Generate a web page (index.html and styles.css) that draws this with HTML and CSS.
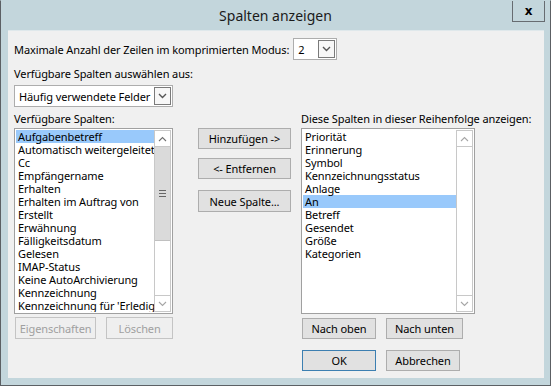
FILE: index.html
```html
<!DOCTYPE html>
<html lang="de">
<head>
  <meta charset="UTF-8">
  <meta name="viewport" content="width=device-width, initial-scale=1.0">
  <title>Spalten anzeigen</title>
  <link rel="stylesheet" href="styles.css">
</head>
<body>

  <div class="window">
    <!-- Title bar -->
    <div class="titlebar">
      <span></span>
      <span class="title">Spalten anzeigen</span>
      <button class="close">x</button>
    </div>

    <div class="client">
      <div class="row-max">
        <span>Maximale Anzahl der Zeilen im komprimierten Modus:</span>
        <div class="combo combo-small">
          <span class="combo-value">2</span>
          <span class="combo-btn"><svg width="9" height="6" viewBox="0 0 9 6"><path d="M1 1 L4.5 4.5 L8 1" fill="none" stroke="#555" stroke-width="1.4"/></svg></span>
        </div>
      </div>

      <div class="label-from">Verfügbare Spalten auswählen aus:</div>
      <div class="combo combo-fields">
        <span class="combo-value">Häufig verwendete Felder</span>
        <span class="combo-btn"><svg width="9" height="6" viewBox="0 0 9 6"><path d="M1 1 L4.5 4.5 L8 1" fill="none" stroke="#555" stroke-width="1.4"/></svg></span>
      </div>

      <div class="columns">
        <!-- Available columns -->
        <div class="col">
          <div class="col-label">Verfügbare Spalten:</div>
          <div class="listbox">
            <ul class="items">
              <li class="selected">Aufgabenbetreff</li>
              <li>Automatisch weitergeleitet</li>
              <li>Cc</li>
              <li>Empfängername</li>
              <li>Erhalten</li>
              <li>Erhalten im Auftrag von</li>
              <li>Erstellt</li>
              <li>Erwähnung</li>
              <li>Fälligkeitsdatum</li>
              <li>Gelesen</li>
              <li>IMAP-Status</li>
              <li>Keine AutoArchivierung</li>
              <li>Kennzeichnung</li>
              <li>Kennzeichnung für 'Erledigt'</li>
            </ul>
            <div class="scrollbar">
              <span class="arrow up"><svg width="9" height="6" viewBox="0 0 9 6"><path d="M1 5 L4.5 1.5 L8 5" fill="none" stroke="#707070" stroke-width="1.1"/></svg></span>
              <span class="thumb"><span class="grip"></span></span>
              <span class="track"></span>
              <span class="arrow down"><svg width="9" height="6" viewBox="0 0 9 6"><path d="M1 1 L4.5 4.5 L8 1" fill="none" stroke="#a6a6a6" stroke-width="1.1"/></svg></span>
            </div>
          </div>
          <div class="btn-row btn-row-left">
            <button class="btn btn-wide" disabled>Eigenschaften</button>
            <button class="btn" disabled>Löschen</button>
          </div>
        </div>

        <!-- Move buttons -->
        <div class="col col-mid">
          <button class="btn btn-mid">Hinzufügen -&gt;</button>
          <button class="btn btn-mid">&lt;- Entfernen</button>
          <button class="btn btn-mid btn-new">Neue Spalte...</button>
        </div>

        <!-- Shown columns -->
        <div class="col col-right">
          <div class="col-label">Diese Spalten in dieser Reihenfolge anzeigen:</div>
          <div class="listbox">
            <ul class="items">
              <li>Priorität</li>
              <li>Erinnerung</li>
              <li>Symbol</li>
              <li>Kennzeichnungsstatus</li>
              <li>Anlage</li>
              <li class="selected">An</li>
              <li>Betreff</li>
              <li>Gesendet</li>
              <li>Größe</li>
              <li>Kategorien</li>
            </ul>
            <div class="scrollbar">
              <span class="arrow up"><svg width="9" height="6" viewBox="0 0 9 6"><path d="M1 5 L4.5 1.5 L8 5" fill="none" stroke="#a6a6a6" stroke-width="1.1"/></svg></span>
              <span class="track"></span>
              <span class="arrow down"><svg width="9" height="6" viewBox="0 0 9 6"><path d="M1 1 L4.5 4.5 L8 1" fill="none" stroke="#a6a6a6" stroke-width="1.1"/></svg></span>
            </div>
          </div>
          <div class="btn-row">
            <button class="btn">Nach oben</button>
            <button class="btn btn-down">Nach unten</button>
          </div>
          <div class="btn-row btn-row-ok">
            <button class="btn btn-default">OK</button>
            <button class="btn">Abbrechen</button>
          </div>
        </div>
      </div>
    </div>
  </div>

</body>
</html>
```

FILE: styles.css
```css
/* Dialog window */
* {
  box-sizing: border-box;
}

body {
  margin: 0;
  font-family: "Noto Sans", sans-serif;
  font-size: 11px;
  letter-spacing: -0.1px;
  color: #000;
}

.window {
  width: 551px;
  height: 386px;
  background-color: #c3d6dc;
  border: 1px solid #5c6064;
  border-top-color: #c3d6dc;
  padding: 0 6px 7px 7px;
  display: flex;
  flex-direction: column;
}

.titlebar {
  height: 29px;
  display: grid;
  grid-template-columns: 1fr auto 1fr;
  align-items: start;
  margin: 0 -6px 0 -7px;
}

.title {
  font-size: 14px;
  letter-spacing: 0;
  line-height: 29px;
  color: #1a1a1a;
}

.close {
  justify-self: end;
  margin-right: 5px;
  width: 33px;
  height: 21px;
  border: 1px solid #676c71;
  border-top: none;
  background-color: #c3d6dc;
  font-family: "DejaVu Sans", sans-serif;
  font-weight: bold;
  font-size: 12px;
  line-height: 16px;
  padding: 0;
  color: #000;
}

.client {
  flex: 1;
  background-color: #f0f0f0;
  border-top: 1px solid #dfe8eb;
  padding: 7px 6px 0 6px;
}

/* Combo boxes */
.row-max {
  display: flex;
  align-items: center;
  gap: 4px;
}

.combo {
  display: flex;
  align-items: center;
  background-color: #fff;
  border: 1px solid #adadad;
  height: 22px;
  padding: 1px;
}

.combo-small {
  width: 44px;
}

.combo-fields {
  width: 159px;
  margin-top: 4px;
}

.combo-value {
  flex: 1;
  padding-left: 3px;
  white-space: nowrap;
  overflow: hidden;
}

.combo-btn {
  width: 17px;
  height: 18px;
  border: 1px solid #7a7a7a;
  background-color: #f7f7f7;
  display: flex;
  align-items: center;
  justify-content: center;
}

.label-from {
  margin-top: 6px;
  line-height: 15px;
}

/* Columns */
.columns {
  display: grid;
  grid-template-columns: 159px 93px 159px;
  column-gap: 25px;
  margin-top: 4px;
}

.col-right {
  margin-left: -15px;
}

.col-label {
  line-height: 15px;
  white-space: nowrap;
}

.listbox {
  margin-top: 2px;
  height: 186px;
  border: 1px solid #a0a0a0;
  padding: 1px;
  background-color: #fff;
  display: flex;
}

.items {
  flex: 1;
  min-width: 0;
  list-style: none;
  margin: 0;
  padding: 0;
  overflow: hidden;
}

.items li {
  height: 13px;
  line-height: 13px;
  padding-left: 2px;
  white-space: nowrap;
}

.items li.selected {
  background-color: #99c9fb;
}

.scrollbar {
  width: 17px;
  border: 1px solid #c8c8c8;
  display: flex;
  flex-direction: column;
}

.arrow {
  height: 16px;
  display: flex;
  align-items: center;
  justify-content: center;
  background-color: #fff;
}

.arrow.up {
  border-bottom: 1px solid #c8c8c8;
}

.arrow.down {
  border-top: 1px solid #c8c8c8;
}

.thumb {
  height: 94px;
  background-color: #dadada;
  border-bottom: 1px solid #c0c0c0;
  display: flex;
  align-items: center;
  justify-content: center;
}

.grip {
  width: 7px;
  height: 7px;
  border-top: 1px solid #666;
  border-bottom: 1px solid #666;
  background: linear-gradient(#666, #666) center / 7px 1px no-repeat;
}

.track {
  flex: 1;
  background-color: #fff;
}

/* Buttons */
.btn {
  font-family: "Noto Sans", sans-serif;
  font-size: 11px;
  letter-spacing: -0.1px;
  color: #000;
  background-color: #e1e1e1;
  border: 1px solid #adadad;
  height: 21px;
  width: 74px;
  padding: 0;
  line-height: 17px;
}

.btn:disabled {
  color: #a0a0a0;
  background-color: #efefef;
  border-color: #c4c4c4;
}

.btn-row {
  display: flex;
  gap: 10px;
  margin-top: 4px;
  margin-left: 1px;
  white-space: nowrap;
}

.btn-row-left {
  margin-top: 3px;
}

.btn-wide {
  width: 90px;
  height: 22px;
}

.btn-row .btn-wide + .btn {
  height: 22px;
}

.btn-down {
  width: 77px;
}

.btn-row-ok {
  margin-top: 11px;
}

.btn-default {
  border-color: #3c7fb1;
}

.col-mid {
  display: flex;
  flex-direction: column;
  padding-top: 17px;
}

.btn-mid {
  width: 93px;
  margin-bottom: 9px;
}

.btn-new {
  margin-top: 2px;
  height: 22px;
}
```
